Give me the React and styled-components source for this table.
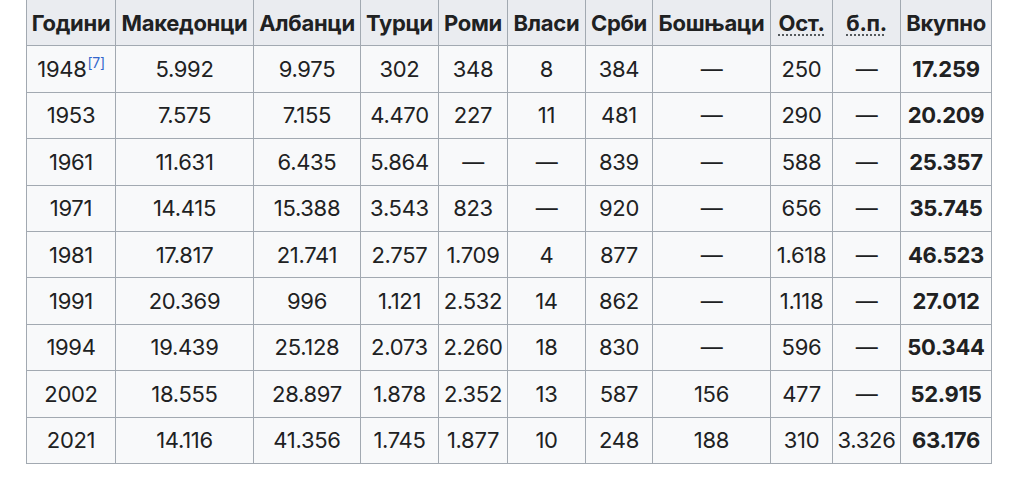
import React from 'react';
import styled, { createGlobalStyle } from 'styled-components';

const GlobalStyle = createGlobalStyle`
  html, body {
    margin: 0;
    padding: 0;
    background: #ffffff;
  }
  body {
    font-family: Inter, "Liberation Sans", Arial, sans-serif;
    color: #202122;
  }
`;

const Page = styled.div`
  width: 1024px;
  height: 480px;
  overflow: hidden;
  padding-left: 26px;
  box-sizing: border-box;
`;

const Table = styled.table`
  margin-top: -1px;
  border-collapse: collapse;
  table-layout: fixed;
  width: 966px;
  background: #f8f9fa;
  border: 1px solid #a2a9b1;
  font-size: 22px;
  letter-spacing: -0.3px;
`;

const Head = styled.th`
  background: #eaecf0;
  border: 1px solid #a2a9b1;
  height: 45.4px;
  padding: 0;
  font-weight: 700;
  text-align: center;
  white-space: nowrap;
`;

const Cell = styled.td`
  border: 1px solid #a2a9b1;
  height: 45.4px;
  padding: 0;
  text-align: center;
  white-space: nowrap;
  font-weight: ${(p) => (p.$bold ? 700 : 400)};
`;

const Abbr = styled.span`
  text-decoration: underline dotted #54595d;
  text-decoration-thickness: 1.5px;
  text-underline-offset: 4px;
`;

const Ref = styled.sup`
  color: #3366cc;
  font-size: 14px;
  line-height: 0;
  vertical-align: 9px;
  margin-left: 1px;
`;

const columns = [
  { label: 'Години', width: 89 },
  { label: 'Македонци', width: 138 },
  { label: 'Албанци', width: 107 },
  { label: 'Турци', width: 78 },
  { label: 'Роми', width: 69 },
  { label: 'Власи', width: 78 },
  { label: 'Срби', width: 67 },
  { label: 'Бошњаци', width: 118 },
  { label: 'Ост.', width: 62, abbr: true },
  { label: 'б.п.', width: 68, abbr: true },
  { label: 'Вкупно', width: 91 },
];

const D = '—';

const rows = [
  ['1948', '5.992', '9.975', '302', '348', '8', '384', D, '250', D, '17.259'],
  ['1953', '7.575', '7.155', '4.470', '227', '11', '481', D, '290', D, '20.209'],
  ['1961', '11.631', '6.435', '5.864', D, D, '839', D, '588', D, '25.357'],
  ['1971', '14.415', '15.388', '3.543', '823', D, '920', D, '656', D, '35.745'],
  ['1981', '17.817', '21.741', '2.757', '1.709', '4', '877', D, '1.618', D, '46.523'],
  ['1991', '20.369', '996', '1.121', '2.532', '14', '862', D, '1.118', D, '27.012'],
  ['1994', '19.439', '25.128', '2.073', '2.260', '18', '830', D, '596', D, '50.344'],
  ['2002', '18.555', '28.897', '1.878', '2.352', '13', '587', '156', '477', D, '52.915'],
  ['2021', '14.116', '41.356', '1.745', '1.877', '10', '248', '188', '310', '3.326', '63.176'],
];

export default function App() {
  return (
    <Page>
      <GlobalStyle />
      <Table>
        <colgroup>
          {columns.map((c) => (
            <col key={c.label} style={{ width: c.width }} />
          ))}
        </colgroup>
        <thead>
          <tr>
            {columns.map((c) => (
              <Head key={c.label}>{c.abbr ? <Abbr>{c.label}</Abbr> : c.label}</Head>
            ))}
          </tr>
        </thead>
        <tbody>
          {rows.map((r, i) => (
            <tr key={r[0]}>
              {r.map((v, j) => (
                <Cell key={j} $bold={j === r.length - 1}>
                  {v}
                  {i === 0 && j === 0 && <Ref>[7]</Ref>}
                </Cell>
              ))}
            </tr>
          ))}
        </tbody>
      </Table>
    </Page>
  );
}
